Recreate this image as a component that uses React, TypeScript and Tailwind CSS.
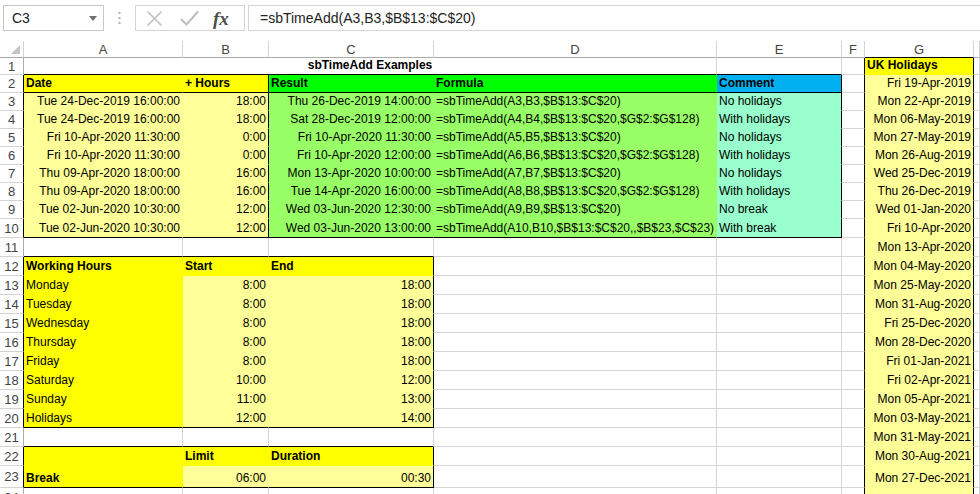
import React from "react";

type Bg = "w" | "y" | "ly" | "g" | "lg" | "b" | "m";
type Cell = {
  t?: string;
  bg?: Bg;
  al?: "l" | "r" | "c";
  bold?: boolean;
  rk?: boolean; // black right border
  bk?: boolean; // black bottom border
  span4?: boolean;
};
type Row = { n: number; h: string; box?: boolean; cells: Cell[] };

const BG: Record<Bg, string> = {
  w: "bg-white",
  y: "bg-[#ffff00]",
  ly: "bg-[#ffff99]",
  g: "bg-[#00ff00]",
  lg: "bg-[#99ff66]",
  b: "bg-[#00b0f0]",
  m: "bg-[#99ffcc]",
};
const BR: Record<Bg, string> = {
  w: "border-r-[#d4d4d4]",
  y: "border-r-[#ffff00]",
  ly: "border-r-[#ffff99]",
  g: "border-r-[#00ff00]",
  lg: "border-r-[#99ff66]",
  b: "border-r-[#00b0f0]",
  m: "border-r-[#99ffcc]",
};
const BB: Record<Bg, string> = {
  w: "border-b-[#d4d4d4]",
  y: "border-b-[#ffff00]",
  ly: "border-b-[#ffff99]",
  g: "border-b-[#00ff00]",
  lg: "border-b-[#99ff66]",
  b: "border-b-[#00b0f0]",
  m: "border-b-[#99ffcc]",
};

const COLS = "grid grid-cols-[24px_159px_86px_165px_283px_125px_23px_109px_1fr]";

const holidays = [
  "Fri 19-Apr-2019", "Mon 22-Apr-2019", "Mon 06-May-2019", "Mon 27-May-2019",
  "Mon 26-Aug-2019", "Wed 25-Dec-2019", "Thu 26-Dec-2019", "Wed 01-Jan-2020",
  "Fri 10-Apr-2020", "Mon 13-Apr-2020", "Mon 04-May-2020", "Mon 25-May-2020",
  "Mon 31-Aug-2020", "Fri 25-Dec-2020", "Mon 28-Dec-2020", "Fri 01-Jan-2021",
  "Fri 02-Apr-2021", "Mon 05-Apr-2021", "Mon 03-May-2021", "Mon 31-May-2021",
  "Mon 30-Aug-2021", "Mon 27-Dec-2021",
];

const examples = [
  ["Tue 24-Dec-2019 16:00:00", "18:00", "Thu 26-Dec-2019 14:00:00", "=sbTimeAdd(A3,B3,$B$13:$C$20)", "No holidays"],
  ["Tue 24-Dec-2019 16:00:00", "18:00", "Sat 28-Dec-2019 12:00:00", "=sbTimeAdd(A4,B4,$B$13:$C$20,$G$2:$G$128)", "With holidays"],
  ["Fri 10-Apr-2020 11:30:00", "0:00", "Fri 10-Apr-2020 11:30:00", "=sbTimeAdd(A5,B5,$B$13:$C$20)", "No holidays"],
  ["Fri 10-Apr-2020 11:30:00", "0:00", "Fri 10-Apr-2020 12:00:00", "=sbTimeAdd(A6,B6,$B$13:$C$20,$G$2:$G$128)", "With holidays"],
  ["Thu 09-Apr-2020 18:00:00", "16:00", "Mon 13-Apr-2020 10:00:00", "=sbTimeAdd(A7,B7,$B$13:$C$20)", "No holidays"],
  ["Thu 09-Apr-2020 18:00:00", "16:00", "Tue 14-Apr-2020 16:00:00", "=sbTimeAdd(A8,B8,$B$13:$C$20,$G$2:$G$128)", "With holidays"],
  ["Tue 02-Jun-2020 10:30:00", "12:00", "Wed 03-Jun-2020 12:30:00", "=sbTimeAdd(A9,B9,$B$13:$C$20)", "No break"],
  ["Tue 02-Jun-2020 10:30:00", "12:00", "Wed 03-Jun-2020 13:00:00", "=sbTimeAdd(A10,B10,$B$13:$C$20,,$B$23,$C$23)", "With break"],
];

const hours = [
  ["Monday", "8:00", "18:00"],
  ["Tuesday", "8:00", "18:00"],
  ["Wednesday", "8:00", "18:00"],
  ["Thursday", "8:00", "18:00"],
  ["Friday", "8:00", "18:00"],
  ["Saturday", "10:00", "12:00"],
  ["Sunday", "11:00", "13:00"],
  ["Holidays", "12:00", "14:00"],
];

// columns F, G, H for a given row number
const tail = (n: number): Cell[] => [
  { rk: true },
  n === 1
    ? { t: "UK Holidays", bg: "y", bold: true, rk: true }
    : { t: holidays[n - 2], bg: "ly", al: "r", rk: true },
  {},
];

const blank = (n: number, bk = false): Cell[] => [
  { bk }, { bk }, { bk },
  {}, {},
  ...tail(n),
];

const rows: Row[] = [];
rows.push({
  n: 1,
  h: "h-[17px]",
  cells: [{ t: "sbTimeAdd Examples", bold: true, al: "c", span4: true, bk: true }, { bk: true }, ...tail(1)],
});
rows.push({
  n: 2,
  h: "h-[18px]",
  box: true,
  cells: [
    { t: "Date", bg: "y", bold: true, bk: true },
    { t: "+ Hours", bg: "y", bold: true, bk: true, rk: true },
    { t: "Result", bg: "g", bold: true, bk: true },
    { t: "Formula", bg: "g", bold: true, bk: true },
    { t: "Comment", bg: "b", bold: true, bk: true, rk: true },
    ...tail(2),
  ],
});
examples.forEach((e, i) => {
  const n = i + 3;
  const last = n === 10;
  rows.push({
    n,
    h: last ? "h-[19px]" : "h-[18px]",
    box: true,
    cells: [
      { t: e[0], bg: "ly", al: "r", bk: last },
      { t: e[1], bg: "ly", al: "r", rk: true, bk: last },
      { t: e[2], bg: "lg", al: "r", bk: last },
      { t: e[3], bg: "lg", bk: last },
      { t: e[4], bg: "m", rk: true, bk: last },
      ...tail(n),
    ],
  });
});
rows.push({ n: 11, h: "h-[19px]", cells: blank(11, true) });
rows.push({
  n: 12,
  h: "h-[19px]",
  box: true,
  cells: [
    { t: "Working Hours", bg: "y", bold: true },
    { t: "Start", bg: "y", bold: true },
    { t: "End", bg: "y", bold: true, rk: true },
    {}, {},
    ...tail(12),
  ],
});
hours.forEach((d, i) => {
  const n = i + 13;
  const last = n === 20;
  rows.push({
    n,
    h: "h-[19px]",
    box: true,
    cells: [
      { t: d[0], bg: "y", bk: last },
      { t: d[1], bg: "ly", al: "r", bk: last },
      { t: d[2], bg: "ly", al: "r", rk: true, bk: last },
      {}, {},
      ...tail(n),
    ],
  });
});
rows.push({ n: 21, h: "h-[19px]", cells: blank(21, true) });
rows.push({
  n: 22,
  h: "h-[19px]",
  box: true,
  cells: [
    { bg: "y" },
    { t: "Limit", bg: "y", bold: true },
    { t: "Duration", bg: "y", bold: true, rk: true },
    {}, {},
    ...tail(22),
  ],
});
rows.push({
  n: 23,
  h: "h-[22px]",
  box: true,
  cells: [
    { t: "Break", bg: "y", bold: true, bk: true },
    { t: "06:00", bg: "ly", al: "r", bk: true },
    { t: "00:30", bg: "ly", al: "r", rk: true, bk: true },
    {}, {},
    ...tail(23),
  ],
});
rows.push({
  n: 24,
  h: "h-[19px]",
  cells: [{}, {}, {}, {}, {}, { rk: true }, { bg: "ly", rk: true }, {}],
});

function CellView({ c }: { c: Cell }) {
  const bg = c.bg ?? "w";
  // coloured cells hide their own gridlines
  const right = c.rk ? "border-r-black" : BR[bg];
  const bottom = c.bk ? "border-b-black" : BB[bg];
  const align = c.al === "r" ? "justify-end" : c.al === "c" ? "justify-center" : "justify-start";
  return (
    <div
      className={`flex items-end overflow-hidden whitespace-nowrap border-r border-b px-[2px] pb-[1px] leading-[15px] ${BG[bg]} ${right} ${bottom} ${align} ${c.bold ? "font-bold" : ""} ${c.span4 ? "col-span-4" : ""}`}
    >
      {c.t}
    </div>
  );
}

function Toolbar() {
  return (
    <div className="flex h-[41px] items-start bg-white pt-[5px] font-['Liberation_Sans',Arial,sans-serif] text-[14px] text-[#222]">
      <div className="ml-[3px] flex h-[26px] w-[101px] items-center justify-between border border-[#c6c6c6] pl-[8px] pr-[6px]">
        <span>C3</span>
        <svg width="8" height="5" viewBox="0 0 8 5">
          <path d="M0 0 L8 0 L4 5 Z" fill="#6f6f6f" />
        </svg>
      </div>
      <div className="flex h-[26px] w-[31px] items-center justify-center">
        <svg width="3" height="12" viewBox="0 0 3 12">
          <rect x="0.5" y="0" width="2" height="2" fill="#b0b0b0" />
          <rect x="0.5" y="5" width="2" height="2" fill="#b0b0b0" />
          <rect x="0.5" y="10" width="2" height="2" fill="#b0b0b0" />
        </svg>
      </div>
      <div className="flex h-[26px] w-[110px] items-center border border-[#d4d4d4]">
        <svg className="ml-[10px]" width="17" height="17" viewBox="0 0 17 17">
          <path d="M1.5 1.5 L15.5 15.5 M15.5 1.5 L1.5 15.5" stroke="#c0c0c0" strokeWidth="1.6" />
        </svg>
        <svg className="ml-[17px]" width="19" height="16" viewBox="0 0 19 16">
          <path d="M1 9 L6.5 14.5 L18 1.5" stroke="#c0c0c0" strokeWidth="2.2" fill="none" />
        </svg>
        <span className="ml-[14px] font-['Liberation_Serif',serif] text-[19px] font-bold italic leading-none text-[#4d4d4d]">
          fx
        </span>
      </div>
      <div className="ml-[3px] flex h-[26px] flex-1 items-center border border-r-0 border-[#d4d4d4] pl-[11px]">
        =sbTimeAdd(A3,B3,$B$13:$C$20)
      </div>
    </div>
  );
}

export default function App() {
  const letters = ["A", "B", "C", "D", "E", "F", "G", ""];
  return (
    <div className="h-[494px] w-[980px] overflow-hidden bg-white">
      <Toolbar />
      <div className="font-['Liberation_Sans',Arial,sans-serif] text-[12px] text-black">
        {/* column letters */}
        <div className={`${COLS} h-[17px]`}>
          <div className="relative border-r border-b border-r-[#d4d4d4] border-b-[#ababab]">
            <svg className="absolute right-[3px] bottom-[3px]" width="9" height="9" viewBox="0 0 9 9">
              <path d="M9 0 L9 9 L0 9 Z" fill="#c4c4c4" />
            </svg>
          </div>
          {letters.map((l, i) => (
            <div
              key={i}
              className={`flex items-center justify-center border-r border-b border-r-[#d4d4d4] text-[13px] leading-none text-[#444] ${i === 6 ? "border-b-black" : "border-b-[#ababab]"}`}
            >
              {l}
            </div>
          ))}
        </div>
        {rows.map((r) => (
          <div key={r.n} className={`${COLS} ${r.h}`}>
            <div
              className={`flex items-center justify-center border-r border-b border-b-[#d4d4d4] text-[13px] leading-none text-[#444] ${r.box ? "border-r-black" : "border-r-[#ababab]"}`}
            >
              {r.n}
            </div>
            {r.cells.map((c, i) => (
              <CellView key={i} c={c} />
            ))}
          </div>
        ))}
      </div>
    </div>
  );
}
